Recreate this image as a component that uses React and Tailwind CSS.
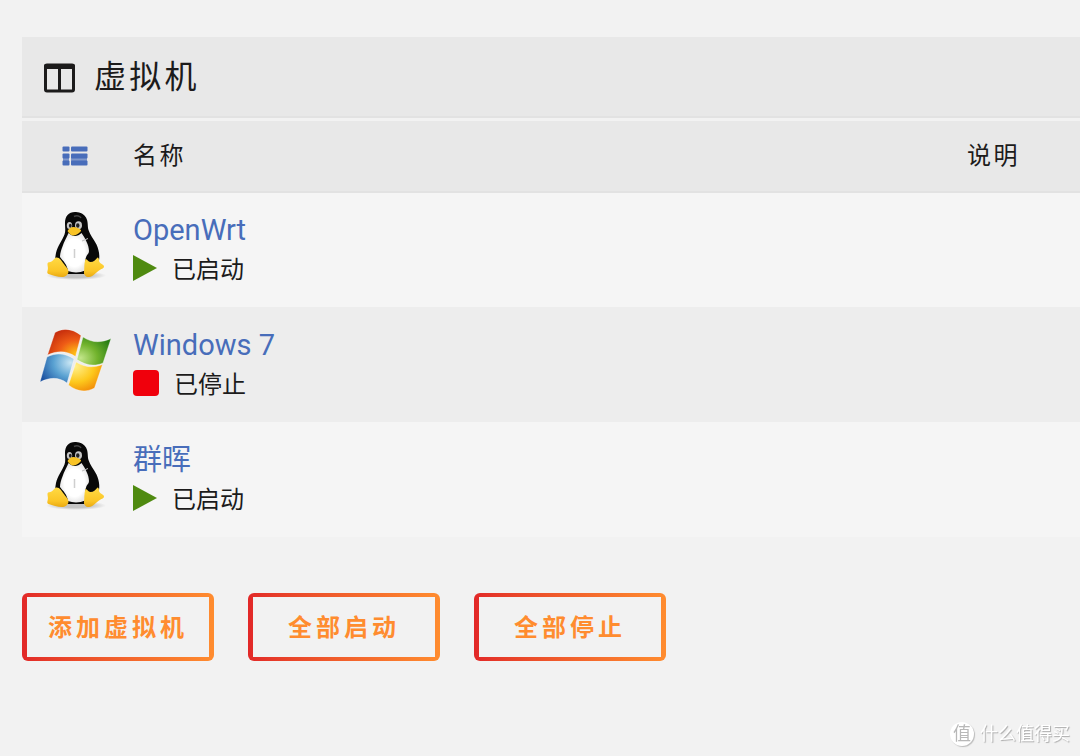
import { useId } from "react";

const vms = [
  { name: "OpenWrt", os: "linux", running: true },
  { name: "Windows 7", os: "windows", running: false },
  { name: "群晖", os: "linux", running: true },
];

const actions = ["添加虚拟机", "全部启动", "全部停止"];

function ColumnsIcon() {
  return (
    <svg className="h-[30px] w-[31px]" viewBox="0 0 31 30" aria-hidden="true">
      <rect x="1.5" y="2" width="28" height="26" rx="1.5" fill="none" stroke="#1c1b1b" strokeWidth="3" />
      <path d="M0 3a2 2 0 0 1 2-2h27a2 2 0 0 1 2 2v3H0zM14 5h3v22h-3z" fill="#1c1b1b" />
    </svg>
  );
}

function ListIcon() {
  return (
    <svg className="h-5 w-[26px]" viewBox="0 0 26 20" fill="#486dba" aria-hidden="true">
      <path d="M1 11h6v6H1zM9 11h16v6H9z" fillOpacity="0.65" />
      <rect x="0.5" y="0.5" width="7" height="5" rx="1" />
      <rect x="9" y="0.5" width="16.5" height="5" rx="1" />
      <rect x="0.5" y="7.5" width="7" height="5" rx="1" />
      <rect x="9" y="7.5" width="16.5" height="5" rx="1" />
      <rect x="0.5" y="14.5" width="7" height="5" rx="1" />
      <rect x="9" y="14.5" width="16.5" height="5" rx="1" />
    </svg>
  );
}

function TuxLogo() {
  const id = useId();
  return (
    <svg className="size-[72px]" viewBox="0 0 72 72" role="img" aria-label="Linux">
      <defs>
        <linearGradient id={`${id}foot`} x1="0" y1="0" x2="0" y2="1">
          <stop offset="0" stopColor="#ffda45" />
          <stop offset="0.7" stopColor="#fbc526" />
          <stop offset="1" stopColor="#e9a912" />
        </linearGradient>
        <radialGradient id={`${id}belly`}>
          <stop offset="0.7" stopColor="#fff" />
          <stop offset="1" stopColor="#e8e8e8" />
        </radialGradient>
        <radialGradient id={`${id}shade`}>
          <stop offset="0.5" stopColor="#c4c4c4" />
          <stop offset="1" stopColor="#c4c4c4" stopOpacity="0" />
        </radialGradient>
      </defs>
      <ellipse cx="37" cy="65.5" rx="30" ry="4.5" fill={`url(#${id}shade)`} />
      <path
        d="M37 2C30 1.500 26 6 26 13c0 5 .8 8-.5 11.500C23.500 30 18.500 36 17 43c-.8 4-1.500 9 .5 13l9 8h22l10-9c3-6 2-14-1-20.500C54.500 29 51 25 49.500 20c-1.200-4 0-8-2.500-12.500C45 4 41.500 2.200 37 2z"
        fill="#080808"
      />
      <path
        d="M29.500 23c-2 5-4.500 8.500-6 13.500-1.500 4-2.500 7-2.500 10.500 3 4 7 7 8 14 5 2 12 2 17-.5 0-5-.5-10 1.500-14.500 1-2 2.500-2.500 2.500-5C50 35 46 28 42.500 23c-4 4-9 4-13 0z"
        fill={`url(#${id}belly)`}
      />
      <path d="M35.500 39v9" fill="none" stroke="#cfcfcf" strokeWidth="1.5" />
      <path d="M43 31l6-2.500" fill="none" stroke="#bbb" strokeWidth="1" />
      <path d="M35 6.500c3-1.500 6-.5 7 1.500" fill="none" stroke="#444" strokeWidth="1.500" />
      <ellipse cx="30.5" cy="15.5" rx="2.700" ry="3.600" fill="#c6c6c6" />
      <ellipse cx="39.5" cy="15.3" rx="3.500" ry="4" fill="#c6c6c6" />
      <ellipse cx="31.3" cy="15.700" rx="1.400" ry="2" fill="#222" />
      <ellipse cx="38.800" cy="15.5" rx="1.700" ry="2.200" fill="#222" />
      <path d="M28.500 21c1-2 3.500-4 6-4s6 1.500 7.500 3c.6 2-5 5.500-7.500 5.500s-4.500-2-6-4.500z" fill="#f8c325" />
      <path
        d="M17 47.500c-1.500.5-2.500 3-4.500 4-1.500.8-3.700.3-4 2-.2 2 .8 4 .3 6-.4 2-1.300 3.500.7 4.500 4 1.500 9 3 13.500 3 3 0 6-2 6.500-5 .3-3-3-5.500-5-8.500s-4-6.500-7.500-6z"
        fill={`url(#${id}foot)`}
      />
      <path
        d="M46.500 49c-1.500 4-.8 9-1.500 13-.4 3 2 5.200 5 5 4-.5 6.500-4 10-6.500 2-1.500 5-2 5-4s-3.500-2.500-4.500-4.500c-.8-1.500 0-4-2-4.500-2 2.500-4 4.500-7 4.500-2.500 0-3-3-5-3z"
        fill={`url(#${id}foot)`}
      />
    </svg>
  );
}

function WindowsLogo() {
  const id = useId();
  return (
    <svg className="size-[72px]" viewBox="0 0 72 72" role="img" aria-label="Windows">
      <defs>
        <radialGradient id={`${id}red`} cx="0.85" cy="0.9" r="1">
          <stop offset="0" stopColor="#ffc414" />
          <stop offset="0.5" stopColor="#ee5b16" />
          <stop offset="1" stopColor="#c32a0c" />
        </radialGradient>
        <radialGradient id={`${id}green`} cx="0.1" cy="0.75" r="1">
          <stop offset="0" stopColor="#c3e68b" />
          <stop offset="0.5" stopColor="#72b32d" />
          <stop offset="1" stopColor="#287d14" />
        </radialGradient>
        <radialGradient id={`${id}blue`} cx="0.9" cy="0.3" r="1">
          <stop offset="0" stopColor="#c9e6f4" />
          <stop offset="0.5" stopColor="#5aa2d2" />
          <stop offset="1" stopColor="#1b51a0" />
        </radialGradient>
        <radialGradient id={`${id}yellow`} cx="0.2" cy="0.15" r="1">
          <stop offset="0" stopColor="#fff08c" />
          <stop offset="0.55" stopColor="#fdc81c" />
          <stop offset="1" stopColor="#f08205" />
        </radialGradient>
      </defs>
      <g stroke="#fff" strokeOpacity="0.6" strokeWidth="0.6">
        <path d="M16 7.500c8-5 18-4 26 3l-5.500 21c-9-6-18-6-28-1.500z" fill={`url(#${id}red)`} />
        <path d="M44 12c9 6 18 6 28 1.500L64 38c-9 4-18 2-26-3.500z" fill={`url(#${id}green)`} />
        <path d="M8 32c9-4.500 18-4 27 2l-7 24c-8-6-17-6-27-1z" fill={`url(#${id}blue)`} />
        <path d="M37 37c9 5.500 17 6 26.500 2.500L55.500 63c-8 4.500-17 4-26-3z" fill={`url(#${id}yellow)`} />
      </g>
    </svg>
  );
}

function Status({ running }) {
  return (
    <div className="flex h-10 items-center gap-[15px]">
      {running ? (
        <svg className="mb-1 h-[26px] w-6" viewBox="0 0 24 26" aria-hidden="true">
          <path d="M0 0l24 13L0 26z" fill="#4f8a10" />
        </svg>
      ) : (
        <span className="mb-1 size-[26px] rounded-[4px] bg-[#f0000c]" />
      )}
      <span>{running ? "已启动" : "已停止"}</span>
    </div>
  );
}

export default function App() {
  return (
    <main className="min-h-screen bg-[#f2f2f2] pt-[37px] pl-[22px] font-[Roboto,'Noto_Sans_CJK_SC',sans-serif] text-2xl text-[#1c1b1b]">
      <h1 className="mb-[3px] flex h-[81px] items-center gap-[19px] border-b-2 border-[#e2e2e2] bg-[#e8e8e8] pt-0.5 pl-[22px] text-[32px] tracking-widest">
        <ColumnsIcon />
        虚拟机
      </h1>

      <table className="w-full table-fixed border-collapse text-left">
        <thead>
          <tr className="h-[71px] border-b-2 border-[#e2e2e2] bg-[#e8e8e8] tracking-widest">
            <th className="w-[111px] pl-10 font-normal" aria-label="列表">
              <ListIcon />
            </th>
            <th className="font-normal">名称</th>
            <th className="w-[113px] font-normal">说明</th>
          </tr>
        </thead>
        <tbody>
          {vms.map((vm) => (
            <tr key={vm.name} className="h-[115px] bg-[#f5f5f5] even:bg-[#ededed]">
              <td className="pb-2 pl-[17px]">
                {vm.os === "linux" ? <TuxLogo /> : <WindowsLogo />}
              </td>
              <td>
                <a href="#" className="block text-[29px] leading-10 text-[#486dba]">
                  {vm.name}
                </a>
                <Status running={vm.running} />
              </td>
              <td />
            </tr>
          ))}
        </tbody>
      </table>

      <div className="mt-14 flex flex-wrap gap-[34px]">
        {actions.map((label) => (
          <button
            key={label}
            type="button"
            className="flex h-[68px] w-48 rounded-md bg-linear-to-r from-[#e22828] to-[#ff8c2f] px-[5px] py-1 font-bold tracking-[4px] text-[#ff8c2f]"
          >
            <span className="flex h-full w-full items-center justify-center bg-[#f2f2f2] pt-0.5">{label}</span>
          </button>
        ))}
      </div>

      <div className="fixed right-2.5 bottom-2.5 flex items-center gap-1.5 text-lg leading-6 text-white [text-shadow:1px_1px_1px_#aaa]">
        <span className="flex size-6 items-center justify-center rounded-full bg-white text-[#b8b8b8] shadow-[1px_1px_1px_#bbb] [text-shadow:none]">
          值
        </span>
        什么值得买
      </div>
    </main>
  );
}
